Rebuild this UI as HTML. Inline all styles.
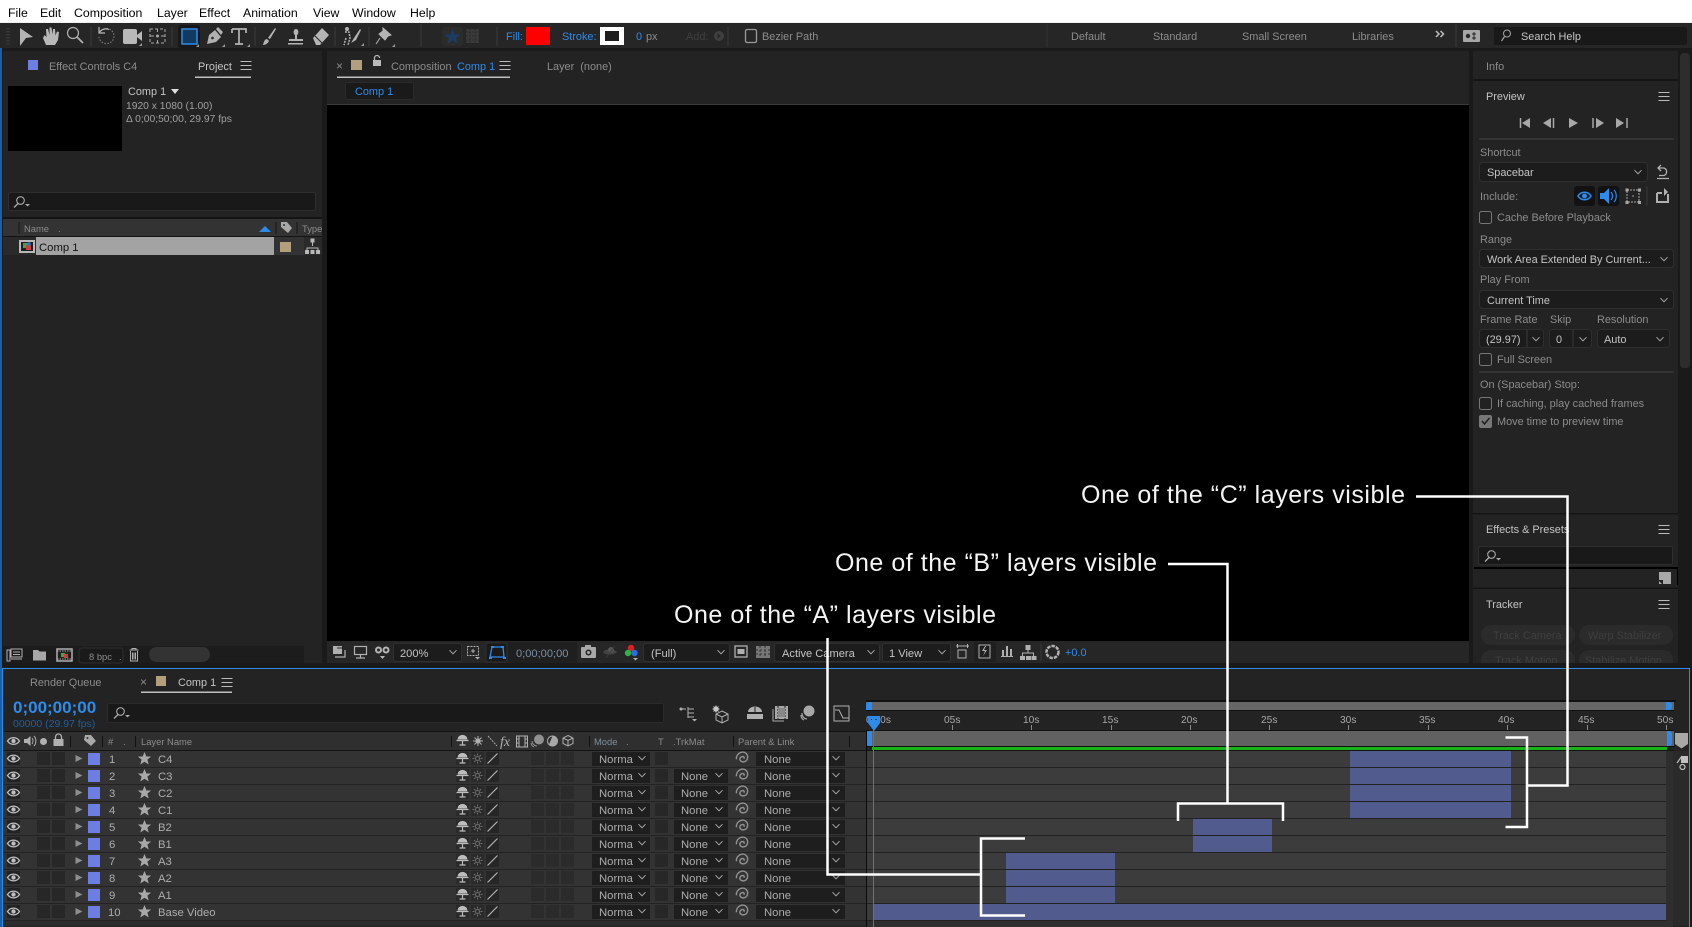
<!DOCTYPE html>
<html lang="en"><head><meta charset="utf-8"><title>After Effects</title>
<style>
html,body{margin:0;padding:0;background:#1a1a1a;width:1692px;height:927px;overflow:hidden}
svg{display:block;position:absolute;left:0;top:0}
text{font-family:"Liberation Sans",sans-serif;font-size:10.9px;fill:#a6a6a6;white-space:pre}
.m{font-size:12.3px;fill:#000}
.d{fill:#8c8c8c}.w{fill:#c4c4c4}.b{fill:#2d8ceb}.f{fill:#3f3f3f}.g{fill:#5a5a5a}
.h{font-size:9.4px;fill:#8c8c8c}
.t{font-size:10.2px;fill:#a8a8a8}
.a{font-size:25px;fill:#f4f4f4}
.r{font-size:11.3px;fill:#adadad}
.l{font-size:10.3px;fill:#a0a0a0}
.v{font-size:11.1px;fill:#c4c4c4}
</style></head><body>
<svg width="1692" height="927" viewBox="0 0 1692 927" xmlns="http://www.w3.org/2000/svg">
<defs>
<g id="eye"><path d="M-6 0C-3-4.5 3-4.5 6 0C3 4.5-3 4.5-6 0Z" fill="none" stroke="#bdbdbd" stroke-width="1.3"/><circle r="2.2" fill="#bdbdbd"/></g>
<polygon id="star" points="0,-6.5 1.9,-2 6.6,-2 2.9,1.1 4.2,6 0,3.3 -4.2,6 -2.9,1.1 -6.6,-2 -1.9,-2" fill="#a8a8a8"/>
<g id="shy"><path d="M-5-.5a5 4.6 0 0 1 10 0z" fill="#bdbdbd"/><path d="M-6 .5H6M0 .5V5M-3 5H3" stroke="#bdbdbd" stroke-width="1.2" fill="none"/></g>
<g id="sun" fill="none" stroke="#6e6e6e"><circle r="2"/><path d="M0-5V-3M0 3V5M-5 0H-3M3 0H5M-3.5-3.5L-2-2M2 2L3.5 3.5M-3.5 3.5L-2 2M2-2L3.5-3.5"/></g>
<g id="spiral"><path d="M.5 .5c1-1 0-2-1.5-1.5s-2 2.500-.5 3.500s4.500 .5 5-2.500s-2-5-4.500-4.500s-4.500 3-4 5.500" fill="none" stroke="#909090" stroke-width="1.1" transform="scale(1.3)"/></g>
<path id="chev" d="M-3.500-1.800L0 1.800L3.500-1.800" fill="none" stroke="#a8a8a8" stroke-width="1"/>
<polygon id="tri" points="-3.500,-3.500 3.500,0 -3.500,3.500" fill="#8e8e8e"/>
<path id="menu" d="M-5.500-4H5.500M-5.500 0H5.500M-5.500 4H5.500" stroke="#bbb" stroke-width="1"/>
<g id="lens"><circle cx="1.500" cy="-1.500" r="3.800" fill="none" stroke="#a8a8a8" stroke-width="1.100"/><path d="M-1 1.500L-5 5.500" stroke="#a8a8a8" stroke-width="1.300"/><path d="M6 2h5l-2.500 2.500z" fill="#a8a8a8"/></g>
<path id="corner" d="M3 0V3H0z" fill="#9a9a9a"/>
<g id="rowbase">
<rect x="7" y="752" width="13" height="13" fill="#232323"/>
<rect x="37" y="752" width="13" height="13" fill="#272727"/><rect x="52" y="752" width="13" height="13" fill="#272727"/>
<use href="#eye" x="13.500" y="758.500"/>
<use href="#tri" x="79" y="758.500"/>
<rect x="88" y="753" width="12" height="12" fill="#6c7ee1"/>
<use href="#star" x="144.500" y="758.500"/>
<rect x="456" y="752" width="13" height="13" fill="#2a2a2a"/>
<use href="#shy" x="462.500" y="758"/>
<rect x="471" y="752" width="13" height="13" fill="#2a2a2a"/>
<use href="#sun" x="477.500" y="758.500"/>
<rect x="486" y="752" width="13" height="13" fill="#262626"/>
<path d="M487.500 763.500L497.500 753.500" stroke="#b2b2b2" stroke-width="1.200"/>
<rect x="531" y="752" width="13" height="13" fill="#2b2b2b"/><rect x="546" y="752" width="13" height="13" fill="#2b2b2b"/><rect x="561" y="752" width="13" height="13" fill="#2b2b2b"/>
<rect x="592" y="752" width="58" height="14" fill="#1e1e1e"/>
<use href="#chev" x="642" y="758"/>
<rect x="655" y="752" width="13" height="13" fill="#272727"/>
<use href="#spiral" x="743" y="758"/>
<rect x="756" y="752" width="89" height="14" fill="#1e1e1e"/>
<use href="#chev" x="836" y="758"/>
</g>
<g id="trk"><rect x="674" y="752" width="54" height="14" fill="#1e1e1e"/><use href="#chev" x="719" y="758"/></g>
<clipPath id="nc"><rect x="590" y="745" width="43" height="30"/></clipPath>
</defs>

<!-- base -->
<rect width="1692" height="927" fill="#1a1a1a"/>
<rect width="1692" height="22" fill="#fff"/>
<rect y="22" width="1692" height="1" fill="#f0f0f0"/>
<rect y="23" width="1692" height="25" fill="#262626"/>
<rect x="0" y="48" width="2" height="879" fill="#1b5fa8"/>

<!-- menu -->
<text class="m" x="8" y="17">File</text><text class="m" x="40" y="17">Edit</text><text class="m" x="74" y="17">Composition</text><text class="m" x="157" y="17">Layer</text><text class="m" x="199" y="17">Effect</text><text class="m" x="243" y="17">Animation</text><text class="m" x="313" y="17">View</text><text class="m" x="352" y="17">Window</text><text class="m" x="410" y="17">Help</text>

<!-- toolbar -->
<path d="M7 28V45M9 28V45" stroke="#444" stroke-dasharray="1.500 1.500" fill="none"/>
<path d="M20 28L33 37L26 38L20 46Z" fill="#b4b4b4"/>
<path d="M43 38l3 7h9l3-5 1-8-2-.5-1.500 4-.5-6.500h-2l-.5 5.500-1-7h-2l0 7.500-1.500-6h-2l.5 8-2-2z" fill="#b8b8b8"/>
<circle cx="73" cy="33" r="5.500" fill="none" stroke="#b0b0b0" stroke-width="1.200"/><path d="M77 37L83 43" stroke="#b0b0b0" stroke-width="1.800"/>
<path d="M91 27V46" stroke="#3a3a3a"/>
<path d="M101 31a7.500 7.500 0 1 1 -2 6" fill="none" stroke="#777" stroke-width="1.200" stroke-dasharray="1.500 1.500"/><path d="M99 27v6h6" fill="none" stroke="#b8b8b8" stroke-width="1.200"/><path d="M99 33a8 8 0 0 1 10-3.500" fill="none" stroke="#b8b8b8" stroke-width="1.200"/>
<rect x="123" y="29" width="14" height="15" rx="2" fill="#b8b8b8"/><path d="M137 35l5-4v10l-5-4z" fill="#b8b8b8"/><use href="#corner" x="139" y="43"/>
<rect x="150" y="29" width="15" height="14" fill="none" stroke="#a8a8a8" stroke-dasharray="3 2"/><path d="M150 36h4M161 36h4M157.500 29v3M157.500 40v3" stroke="#a8a8a8"/><circle cx="157.500" cy="36" r="1.500" fill="#a8a8a8"/>
<path d="M172 27V46" stroke="#3a3a3a"/>
<rect x="178" y="25" width="22" height="23" rx="3" fill="#181818"/>
<rect x="182" y="29" width="15" height="15" fill="#123a5e" stroke="#2d8ceb" stroke-width="1.500"/><use href="#corner" x="196" y="44"/>
<path d="M207 44l2-9 6-5 6 7-5 5zM216 29l2-2 5 5-2 3z" fill="#b0b0b0"/><circle cx="212.500" cy="38" r="1.300" fill="#262626"/><use href="#corner" x="222" y="44"/>
<path d="M232 29h14v4M239 29v15M235 44h8M232 33v-4" fill="none" stroke="#b4b4b4" stroke-width="1.700"/><use href="#corner" x="247" y="44"/>
<path d="M255 27V46" stroke="#3a3a3a"/>
<path d="M263 45c1-4 2-6 4-6l2 2c-1 2-3 4-6 4zM268 38l7-10 1 1-6 10z" fill="#b4b4b4"/>
<path d="M295 39v-4c-2-1-2-6 1-6s3 5 1 6v4h6v2h-14v-2zM288 43h15v1.500h-15z" fill="#b4b4b4"/>
<path d="M313 38l9-10 7 7-9 10h-4z" fill="#b4b4b4"/><path d="M315 36l7 7" stroke="#262626"/>
<path d="M335 27V46" stroke="#3a3a3a"/>
<circle cx="347" cy="29" r="2" fill="#b4b4b4"/><path d="M345 32h4l1 6-2 7M346 38l-2 7" fill="none" stroke="#b4b4b4" stroke-width="1.500" stroke-dasharray="2 1"/><path d="M351 43l3-5 6-9 1 1-5 10z" fill="#b4b4b4"/><use href="#corner" x="361" y="43"/>
<path d="M369 27V46" stroke="#3a3a3a"/>
<path d="M383 28l8 7-3 1-3 4-6-6 4-3zM380 38l-4 6" fill="#b4b4b4" stroke="#b4b4b4"/><use href="#corner" x="392" y="44"/>
<path d="M421 24V47" stroke="#3a3a3a"/>
<rect x="442" y="27" width="21" height="19" rx="3" fill="#2c2c2c"/>
<polygon points="452.500,29 454.800,34.500 460.500,34.500 456,38 457.500,43.500 452.500,40.300 447.500,43.500 449,38 444.500,34.500 450.200,34.500" fill="#1a3d66"/>
<rect x="466" y="29" width="13" height="14" fill="#3a3a3a"/><path d="M466 32h13M466 36h13M466 40h13M470 29v14M475 29v14" stroke="#262626" stroke-dasharray="1.500 1.500"/>
<path d="M497 27V46" stroke="#3a3a3a"/>
<text class="b" x="506" y="40">Fill:</text>
<rect x="526" y="27" width="24" height="18" fill="#f00"/>
<text class="b" x="562" y="40">Stroke:</text>
<rect x="600" y="27" width="24" height="18" fill="#fff"/><rect x="605" y="31" width="14" height="10" fill="#1e1e1e"/>
<text class="b" x="636" y="40">0</text><text class="d" x="646" y="40">px</text>
<text class="f" x="686" y="40">Add:</text>
<circle cx="719" cy="36" r="5" fill="#3f3f3f"/><path d="M717.500 33.500l3.500 2.500-3.500 2.500z" fill="#262626"/>
<path d="M728 27V46" stroke="#3a3a3a"/>
<rect x="745.500" y="29.500" width="11" height="13" rx="1.500" fill="none" stroke="#9a9a9a" stroke-width="1.300"/>
<text class="d" x="762" y="40">Bezier Path</text>
<path d="M1047 24V47" stroke="#333"/>
<text class="d" x="1071" y="40">Default</text><text class="d" x="1153" y="40">Standard</text><text class="d" x="1242" y="40">Small Screen</text><text class="d" x="1352" y="40">Libraries</text>
<path d="M1436 31l3 3-3 3M1440.500 31l3 3-3 3" fill="none" stroke="#bdbdbd" stroke-width="1.500"/>
<path d="M1456 24V47" stroke="#3a3a3a"/>
<rect x="1463" y="30" width="17" height="12" rx="1" fill="#a6a6a6"/><circle cx="1468" cy="36" r="2.200" fill="#262626"/><path d="M1474 32v8M1472 34h4M1472 38h4" stroke="#262626"/>
<rect x="1494" y="27" width="193" height="18" rx="2" fill="#191919"/>
<circle cx="1507" cy="33.500" r="3.500" fill="none" stroke="#a0a0a0"/><path d="M1504.500 36.500L1501.500 41" stroke="#a0a0a0" stroke-width="1.200"/>
<text class="w" x="1521" y="40">Search Help</text>

<!-- LEFT PANEL -->
<rect x="3" y="51" width="319" height="591" fill="#232323"/>
<rect x="28" y="60" width="10" height="10" fill="#6c7ee1"/>
<text class="d" x="49" y="70">Effect Controls C4</text>
<text class="w" x="198" y="70">Project</text><use href="#menu" x="246" y="65.500"/>
<rect x="195" y="76.500" width="56" height="1.500" fill="#c0c0c0"/>
<rect x="8" y="86" width="114" height="65" fill="#000"/>
<text class="w" x="128" y="95">Comp 1</text><polygon points="171,89 179,89 175,94" fill="#e0e0e0"/>
<text class="l" x="126" y="109">1920 x 1080 (1.00)</text>
<text class="l" x="126" y="122">Δ 0;00;50;00, 29.97 fps</text>
<rect x="8.500" y="192.500" width="307" height="18" rx="2" fill="#191919" stroke="#2e2e2e"/>
<use href="#lens" x="19" y="202"/>
<rect x="3" y="217" width="319" height="2" fill="#141414"/>
<rect x="3" y="219" width="319" height="17" fill="#333"/>
<rect x="3" y="236" width="319" height="1" fill="#141414"/>
<path d="M19 222V234M276 222V234M297 222V234" stroke="#141414"/>
<text class="h" x="24" y="232">Name</text><text class="h" x="58" y="232">.</text>
<polygon points="259,232 271,232 265,226" fill="#2d8ceb"/>
<path d="M281 222h6l5 6-4 5-7-6z" fill="#a8a8a8"/><circle cx="284" cy="225" r="1" fill="#333"/>
<text class="h" x="302" y="232">Type</text>
<rect x="3" y="237" width="319" height="18" fill="#2a2a2a"/>
<rect x="19" y="240" width="16" height="13" fill="#b8b8b8"/><rect x="21" y="242" width="12" height="9" fill="#1f1f1f"/><rect x="23" y="243" width="5" height="5" fill="#3fa34d"/><rect x="26" y="245" width="5" height="5" fill="#c64040"/><circle cx="29" cy="244" r="1.800" fill="#3a6fd8"/>
<rect x="36" y="237" width="238" height="18" fill="#a3a3a3"/>
<text x="39" y="251" style="fill:#111;font-size:11.3px">Comp 1</text>
<rect x="274" y="237" width="30" height="18" fill="#333"/>
<rect x="280" y="242" width="11" height="10" fill="#b29f7e"/>
<path d="M312.500 241v5M307 252v-4h11v4" fill="none" stroke="#b8b8b8"/><rect x="310.500" y="238.500" width="4" height="4" fill="#b8b8b8"/><rect x="305" y="250" width="4" height="4" fill="#b8b8b8"/><rect x="310.500" y="250" width="4" height="4" fill="#b8b8b8"/><rect x="316" y="250" width="4" height="4" fill="#b8b8b8"/>
<rect x="3" y="646" width="301" height="17" fill="#1c1c1c"/><rect x="3" y="642" width="319" height="4" fill="#232323"/><rect x="304" y="646" width="18" height="17" fill="#232323"/>
<path d="M7 650h3v11H7zM11 649h11v8H11zM13 652h7M13 654.500h7M11 659h11" stroke="#b0b0b0" fill="none" stroke-width="1"/>
<path d="M33 650h5l1.500 1.500H46v9H33z" fill="#a8a8a8"/>
<rect x="57" y="649" width="15" height="12" fill="none" stroke="#b0b0b0" stroke-width="1.500"/><path d="M57 651h15M57 659h15" stroke="#b0b0b0" stroke-dasharray="1.500 1" /><rect x="60" y="652" width="9" height="6" fill="#222"/><rect x="61" y="653" width="4" height="4" fill="#3fa34d"/><rect x="64" y="654" width="4" height="4" fill="#c64040"/>
<rect x="79" y="648" width="44" height="15" rx="3" fill="#1a1a1a" stroke="#2e2e2e"/>
<text class="h" x="89" y="660">8 bpc</text><text class="h" x="119" y="660">.</text>
<path d="M129.500 650h9M132 650v-1.500h4V650M130.500 651v10h7v-10M132.500 652.500v7M134 652.500v7M135.500 652.500v7" stroke="#b0b0b0" fill="none"/>
<rect x="149" y="647" width="61" height="15" rx="7.500" fill="#333"/>

<!-- COMP PANEL -->
<rect x="327" y="51" width="1142" height="54" fill="#232323"/>
<text x="336" y="70" class="d" style="font-size:12px">×</text>
<rect x="351" y="60" width="11" height="10" fill="#b29f7e"/>
<path d="M374.500 60v-2a2.500 2.500 0 0 1 5 0" fill="none" stroke="#b8b8b8" stroke-width="1.300"/><rect x="373" y="60" width="8" height="6" fill="#b8b8b8"/>
<text class="d" x="391" y="70">Composition</text><text class="b" x="457" y="70">Comp 1</text><use href="#menu" x="505" y="65.500"/>
<rect x="337" y="76.500" width="173" height="1.500" fill="#c0c0c0"/>
<text class="d" x="547" y="70">Layer  (none)</text>
<rect x="345.500" y="82.500" width="68" height="17" rx="2" fill="#1a1a1a" stroke="#2a2a2a"/>
<text class="b" x="355" y="95">Comp 1</text>
<rect x="327" y="104" width="1142" height="1" fill="#3a3a3a"/>
<rect x="327" y="105" width="1142" height="536" fill="#000"/>
<rect x="327" y="641" width="1142" height="22" fill="#262626"/>
<rect x="333" y="646" width="9" height="8" fill="#b0b0b0"/><path d="M345 650v7h-10" fill="none" stroke="#b0b0b0" stroke-width="1.200"/><path d="M337 648h5" stroke="#262626"/>
<rect x="354.500" y="646.500" width="12" height="8" fill="none" stroke="#b0b0b0" stroke-width="1.200"/><path d="M360.500 655v2.500M356 658h9" stroke="#b0b0b0" stroke-width="1.200"/>
<circle cx="378.500" cy="650" r="3.500" fill="#b4b4b4"/><circle cx="386" cy="650" r="3.500" fill="#b4b4b4"/><circle cx="378.500" cy="650" r="1.500" fill="#262626"/><circle cx="386" cy="650" r="1.500" fill="#262626"/><path d="M380 656h5l-2.500 3z" fill="#b4b4b4"/>
<rect x="393.500" y="643.500" width="68" height="18" rx="2.500" fill="#1c1c1c" stroke="#303030"/>
<text class="v" x="400" y="657">200%</text><use href="#chev" x="453" y="652"/>
<rect x="467.500" y="646.500" width="11" height="9" fill="none" stroke="#b0b0b0" stroke-dasharray="2 1"/><path d="M473 649v4M471 651h4" stroke="#b0b0b0"/><path d="M475 657h5l-2.500 2.500z" fill="#b0b0b0"/>
<rect x="486" y="643" width="21" height="19" rx="2.500" fill="#1a1a1a" stroke="#2e2e2e"/>
<path d="M490 657l2-10h11l1 10z" fill="none" stroke="#2d8ceb" stroke-width="1.300"/><path d="M489 657h3v2h-3zM503 657h3v2h-3zM491 646h3v2h-3zM501 646h3v2h-3z" fill="#2d8ceb"/>
<rect x="508" y="642" width="69" height="21" fill="#1f1f1f"/>
<text x="516" y="657" style="fill:#7a8ea2;font-size:11.100px">0;00;00;00</text>
<rect x="581" y="647" width="15" height="11" rx="1" fill="#a8a8a8"/><rect x="585" y="645" width="6" height="3" fill="#a8a8a8"/><circle cx="588.500" cy="652.500" r="3" fill="#262626"/><circle cx="588.500" cy="652.500" r="1.500" fill="#a8a8a8"/>
<path d="M603 652c2.500-3.500 11-3.500 14 0c-3 3.500-11.500 3.500-14 0z" fill="#444"/><circle cx="611" cy="650" r="3" fill="#555"/><path d="M606 658l9-12" stroke="#3a3a3a"/>
<circle cx="631" cy="648" r="3.200" fill="#e02020"/><circle cx="628" cy="653" r="3.200" fill="#2fb344"/><circle cx="634.500" cy="653" r="3.200" fill="#2d6be0"/><path d="M633 658h5l-2.500 2.500z" fill="#b0b0b0"/>
<rect x="643.500" y="643.500" width="86" height="18" rx="2.500" fill="#1c1c1c" stroke="#303030"/>
<text class="v" x="651" y="657">(Full)</text><use href="#chev" x="721" y="652"/>
<rect x="735" y="646" width="12" height="11" fill="none" stroke="#b0b0b0" stroke-width="1.300"/><rect x="737.500" y="649" width="7" height="5" fill="#b0b0b0"/>
<rect x="756" y="646" width="14" height="12" fill="#777"/><path d="M756 650h14M756 654h14M760 646v12M765 646v12" stroke="#333" stroke-dasharray="2 2"/>
<rect x="774.500" y="643.500" width="105" height="18" rx="2.500" fill="#1c1c1c" stroke="#303030"/>
<text class="v" x="782" y="657">Active Camera</text><use href="#chev" x="871" y="652"/>
<rect x="882.500" y="643.500" width="68" height="18" rx="2.500" fill="#1c1c1c" stroke="#303030"/>
<text class="v" x="889" y="657">1 View</text><use href="#chev" x="942" y="652"/>
<path d="M956 646h13M957.500 644v4M967.500 644v4" stroke="#b0b0b0"/><rect x="958" y="650" width="8" height="8" fill="none" stroke="#b0b0b0"/>
<rect x="974" y="642" width="22" height="20" rx="2" fill="#1f1f1f"/><rect x="979" y="645" width="11" height="13" fill="none" stroke="#b0b0b0"/><path d="M985 646l-3 5h3l-2 5 4-6h-3l2-4z" fill="#b0b0b0"/>
<path d="M1001 656h12v1h-12zM1002 650h2v6h-2zM1006 646h2v10h-2zM1010 649h2v7h-2z" fill="#b0b0b0"/>
<path d="M1028 650v3M1022.500 657v-4h11v4" fill="none" stroke="#b0b0b0"/><rect x="1025.500" y="645" width="5" height="5" fill="#b0b0b0"/><rect x="1020" y="656" width="5" height="4" fill="#b0b0b0"/><rect x="1026" y="656" width="5" height="4" fill="#b0b0b0"/><rect x="1031.500" y="656" width="5" height="4" fill="#b0b0b0"/>
<path d="M1041 644V661" stroke="#3a3a3a"/>
<circle cx="1052.500" cy="652" r="6" fill="none" stroke="#b0b0b0" stroke-width="2.500" stroke-dasharray="3.500 1"/>
<text class="b" x="1065" y="656">+0.0</text>

<!-- RIGHT PANEL -->
<rect x="1473" y="51" width="205" height="612" fill="#232323"/>
<rect x="1473" y="79" width="205" height="2" fill="#151515"/>
<rect x="1680" y="53" width="10" height="315" rx="4" fill="#2d2d2d"/>
<text class="d" x="1486" y="70">Info</text>
<text class="w" x="1486" y="100">Preview</text><use href="#menu" x="1664" y="96.500"/>
<path d="M1520.500 118v10" stroke="#a8a8a8" stroke-width="1.500"/><path d="M1530 118v10l-8-5z" fill="#a8a8a8"/>
<path d="M1551 118v10l-8-5z" fill="#a8a8a8"/><path d="M1553.500 118v10" stroke="#a8a8a8" stroke-width="1.500"/>
<path d="M1569 118l9 5-9 5z" fill="#a8a8a8"/>
<path d="M1593 118v10" stroke="#a8a8a8" stroke-width="1.500"/><path d="M1596 118l8 5-8 5z" fill="#a8a8a8"/>
<path d="M1616 118l8 5-8 5z" fill="#a8a8a8"/><path d="M1627 118v10" stroke="#a8a8a8" stroke-width="1.500"/>
<rect x="1479" y="138" width="195" height="2" fill="#333"/>
<text class="d" x="1480" y="156">Shortcut</text>
<rect x="1479.500" y="162.500" width="168" height="19" rx="3" fill="#1c1c1c" stroke="#2e2e2e"/>
<text class="w" x="1487" y="176">Spacebar</text><use href="#chev" x="1638" y="172"/>
<path d="M1659 168h5a4 4 0 0 1 0 7.500h-5M1661 165l-3 3 3 3M1657 178.500h12" fill="none" stroke="#b0b0b0" stroke-width="1.300"/>
<text class="d" x="1480" y="200">Include:</text>
<rect x="1574" y="186" width="21" height="20" rx="3" fill="#121212"/>
<path d="M1578 196c3-5 10-5 13 0c-3 5-10 5-13 0z" fill="none" stroke="#2d8ceb" stroke-width="1.500"/><circle cx="1584.500" cy="196" r="2.500" fill="#2d8ceb"/>
<rect x="1598" y="186" width="21" height="20" rx="3" fill="#121212"/>
<path d="M1600 193h4l5-5v16l-5-5h-4z" fill="#2d8ceb"/><path d="M1611 192c2 2 2 6 0 8M1614 190c3 3 3 9 0 12" fill="none" stroke="#2d8ceb" stroke-width="1.200"/>
<rect x="1627" y="190" width="12" height="12" fill="none" stroke="#a8a8a8" stroke-dasharray="2 1"/><path d="M1625.500 188.500h3v3h-3zM1638 188.500h3v3h-3zM1625.500 201h3v3h-3zM1638 201h3v3h-3z" fill="#a8a8a8"/><circle cx="1633" cy="196" r=".8" fill="#a8a8a8"/>
<path d="M1647 186V206" stroke="#333" stroke-width="1.500"/>
<path d="M1657 193h5M1668 194v8h-11v-9" fill="none" stroke="#b0b0b0" stroke-width="2"/><path d="M1664 188l4 4-4 4z" fill="#b0b0b0"/>
<rect x="1479.500" y="211.500" width="12" height="12" rx="2" fill="#222" stroke="#777"/>
<text class="d" x="1497" y="221">Cache Before Playback</text>
<text class="d" x="1480" y="243">Range</text>
<rect x="1479.500" y="249.500" width="194" height="18" rx="3" fill="#1c1c1c" stroke="#2e2e2e"/>
<text class="w" x="1487" y="263">Work Area Extended By Current...</text><use href="#chev" x="1664" y="259"/>
<text class="d" x="1480" y="283">Play From</text>
<rect x="1479.500" y="290.500" width="194" height="18" rx="3" fill="#1c1c1c" stroke="#2e2e2e"/>
<text class="w" x="1487" y="304">Current Time</text><use href="#chev" x="1664" y="300"/>
<text class="d" x="1480" y="323">Frame Rate</text><text class="d" x="1550" y="323">Skip</text><text class="d" x="1597" y="323">Resolution</text>
<rect x="1479.500" y="329.500" width="64" height="18" rx="3" fill="#1c1c1c" stroke="#2e2e2e"/><path d="M1527 330v17" stroke="#3a3a3a"/>
<text class="w" x="1486" y="343">(29.97)</text><use href="#chev" x="1536" y="339"/>
<rect x="1549.500" y="329.500" width="42" height="18" rx="3" fill="#1c1c1c" stroke="#2e2e2e"/><path d="M1573 330v17" stroke="#3a3a3a"/>
<text class="w" x="1556" y="343">0</text><use href="#chev" x="1583" y="339"/>
<rect x="1597.500" y="329.500" width="72" height="18" rx="3" fill="#1c1c1c" stroke="#2e2e2e"/>
<text class="w" x="1604" y="343">Auto</text><use href="#chev" x="1660" y="339"/>
<rect x="1479.500" y="353.500" width="12" height="12" rx="2" fill="#222" stroke="#777"/>
<text class="d" x="1497" y="363">Full Screen</text>
<rect x="1479" y="371" width="195" height="2" fill="#333"/>
<text class="d" x="1480" y="388">On (Spacebar) Stop:</text>
<rect x="1479.500" y="397.500" width="12" height="12" rx="2" fill="#222" stroke="#777"/>
<text class="d" x="1497" y="407">If caching, play cached frames</text>
<rect x="1479" y="415" width="13" height="13" rx="2" fill="#777"/><path d="M1482 421l2.500 3 5-6" fill="none" stroke="#1e1e1e" stroke-width="1.500"/>
<text class="d" x="1497" y="425">Move time to preview time</text>
<rect x="1473" y="513" width="205" height="1.500" fill="#151515"/>
<text class="w" x="1486" y="533">Effects &amp; Presets</text><use href="#menu" x="1664" y="529.500"/>
<rect x="1478.500" y="546.500" width="194" height="18" rx="2" fill="#191919" stroke="#2e2e2e"/>
<use href="#lens" x="1490" y="556"/>
<rect x="1474" y="567" width="204" height="2" fill="#000"/>
<path d="M1659 572h12v12h-8v-4h-4z" fill="#a8a8a8"/><path d="M1659 581l3 3h-3z" fill="#a8a8a8"/>
<rect x="1677" y="569" width="1" height="16" fill="#000"/>
<rect x="1473" y="587.500" width="205" height="1.500" fill="#151515"/>
<text class="w" x="1486" y="608">Tracker</text><use href="#menu" x="1664" y="604.500"/>
<rect x="1481" y="625" width="94" height="20" rx="10" fill="#2b2b2b"/><rect x="1579" y="625" width="94" height="20" rx="10" fill="#2b2b2b"/>
<rect x="1481" y="650" width="94" height="20" rx="10" fill="#2b2b2b"/><rect x="1579" y="650" width="94" height="20" rx="10" fill="#2b2b2b"/>
<text class="f" x="1493" y="639">Track Camera</text><text class="f" x="1588" y="639">Warp Stabilizer</text>
<text class="f" x="1495" y="664">Track Motion</text><text class="f" x="1585" y="664">Stabilize Motion</text>
<rect x="1470" y="663" width="222" height="5" fill="#1a1a1a"/>

<!-- TIMELINE PANEL -->
<rect x="2" y="668" width="1688" height="259" fill="#232323"/>
<path d="M2.500 927V668.500H1689.500V927" fill="none" stroke="#2d8ceb"/>
<text class="d" x="30" y="686">Render Queue</text>
<text class="d" x="140" y="686" style="font-size:12px">×</text>
<rect x="156" y="676" width="10" height="10" fill="#b29f7e"/>
<text class="w" x="178" y="686">Comp 1</text><use href="#menu" x="227" y="682.500"/>
<rect x="141" y="691.500" width="91" height="1.500" fill="#c0c0c0"/>
<text x="13" y="713" style="font-size:17px;font-weight:bold;fill:#2d8ceb">0;00;00;00</text>
<text x="13" y="727" style="font-size:10.500px;fill:#1f5f9e">00000 (29.97 fps)</text>
<rect x="107.500" y="703.500" width="556" height="19" rx="2" fill="#191919" stroke="#2a2a2a"/>
<use href="#lens" x="119" y="713"/>
<!-- switches -->
<path d="M680 709h6M688 707v11M688 709h6M688 713h6M688 717h6" stroke="#b0b0b0" fill="none"/><circle cx="681" cy="709" r="1.500" fill="#b0b0b0"/><path d="M692 719h5l-2.500 2.500z" fill="#b0b0b0"/>
<path d="M716 705l1 2 2-1-1 2 2 1-2 1 1 2-2-1-1 2-1-2-2 1 1-2-2-1 2-1-1-2 2 1z" fill="#c8c8c8"/><path d="M722 711l6 3v6l-6 3-6-3v-6z" fill="none" stroke="#b0b0b0"/><path d="M716 714l6 3 6-3M722 717v6" fill="none" stroke="#b0b0b0"/>
<path d="M748 712a7 5.500 0 0 1 14 0z" fill="#b0b0b0"/><path d="M755 707v5" stroke="#232323"/><rect x="747" y="714" width="16" height="5" fill="#b0b0b0"/>
<rect x="775" y="706" width="13" height="13" fill="#a8a8a8"/><path d="M778 706v13M785 706v13" stroke="#232323" stroke-dasharray="2 1"/><rect x="778" y="708" width="7" height="9" fill="#888"/><path d="M773 709v12h11" fill="none" stroke="#a8a8a8"/>
<circle cx="809" cy="711" r="5.500" fill="#a8a8a8"/><path d="M802 713a5.500 5.500 0 0 0 5 6M801 715a5.500 5.500 0 0 0 3 5" fill="none" stroke="#a8a8a8" stroke-width="1.200"/>
<rect x="834" y="706" width="15" height="15" fill="none" stroke="#b0b0b0"/><path d="M835 710h4l4 8h6" fill="none" stroke="#b0b0b0"/>
<!-- header -->
<rect x="3" y="731" width="863" height="1" fill="#141414"/>
<rect x="3" y="732" width="863" height="18" fill="#2f2f2f"/>
<rect x="3" y="750" width="1671" height="1" fill="#141414"/>
<use href="#eye" x="13.500" y="741"/>
<path d="M24 739h3l3.500-3v10l-3.500-3h-3z" fill="#b0b0b0"/><path d="M32 738a5 5 0 0 1 0 6M34 736a7.500 7.500 0 0 1 0 10" fill="none" stroke="#b0b0b0"/>
<circle cx="43.500" cy="741.500" r="3.500" fill="#b0b0b0"/>
<path d="M55.500 739v-2a3 3 0 0 1 6 0v2" fill="none" stroke="#b0b0b0" stroke-width="1.300"/><rect x="53.500" y="739" width="10" height="7" fill="#b0b0b0"/>
<path d="M70.500 736V747M102.500 736V747M135.500 736V747M451.500 736V747M589.500 736V747M733.500 736V747M849.500 736V747" stroke="#111"/>
<path d="M85 735h6l5 6-5 5-7-6z" fill="#a8a8a8"/><circle cx="87.500" cy="738" r="1" fill="#2f2f2f"/>
<text class="h" x="108" y="745">#</text><text class="h" x="123" y="745">.</text>
<text class="h" x="141" y="745">Layer Name</text>
<use href="#shy" x="462.500" y="740"/>
<path d="M473 741h10M478 736v10M474.500 737.500l7 7M474.500 744.500l7-7" stroke="#b0b0b0"/><circle cx="478" cy="741" r="2.500" fill="#b0b0b0"/>
<path d="M488 736l9 10" stroke="#a8a8a8" stroke-dasharray="2 1"/>
<text x="500" y="746" style="font-size:14px;font-style:italic;font-family:'Liberation Serif',serif;fill:#b0b0b0">fx</text>
<rect x="516.500" y="736" width="11" height="11" fill="none" stroke="#b0b0b0"/><path d="M519 736v11M525 736v11M516 739h3M516 743h3M525 739h3M525 743h3" stroke="#b0b0b0"/>
<circle cx="539" cy="739.500" r="5" fill="#909090"/><path d="M532 741a5 5 0 0 0 5 5M531 743a5 5 0 0 0 3 4" fill="none" stroke="#909090"/>
<circle cx="552.500" cy="741" r="5" fill="#a8a8a8"/><path d="M552.500 736a5 5 0 0 0-3.500 8.500z" fill="#2f2f2f"/><circle cx="552.500" cy="741" r="5" fill="none" stroke="#a8a8a8"/>
<path d="M568 735.500l5 2.500v5.500l-5 2.500-5-2.500V738zM563 738l5 2.500 5-2.500M568 740.500V746" fill="none" stroke="#b0b0b0"/>
<text class="h" x="594" y="745" style="fill:#7f8da0">Mode</text><text class="h" x="626" y="745" style="fill:#7f8da0">.</text>
<text class="h" x="658" y="745">T</text><text class="h" x="673" y="745">.TrkMat</text>
<text class="h" x="738" y="745">Parent &amp; Link</text>

<!-- layer rows -->
<rect x="3" y="751" width="863" height="170" fill="#333"/>
<path d="M3 767.500H866M3 784.500H866M3 801.500H866M3 818.500H866M3 835.500H866M3 852.500H866M3 869.500H866M3 886.500H866M3 903.500H866M3 920.500H866" stroke="#222"/>
<rect x="3" y="921" width="863" height="5" fill="#2c2c2c"/>

<use href="#rowbase"/>
<text class="r" x="109" y="763">1</text><text class="r" x="158" y="763">C4</text><text class="r" x="599" y="763" clip-path="url(#nc)">Normal</text><text class="r" x="764" y="763">None</text>

<g transform="translate(0,17)"><use href="#rowbase"/><use href="#trk"/><text class="r" x="109" y="763">2</text><text class="r" x="158" y="763">C3</text><text class="r" x="599" y="763" clip-path="url(#nc)">Normal</text><text class="r" x="681" y="763">None</text><text class="r" x="764" y="763">None</text></g>
<g transform="translate(0,34)"><use href="#rowbase"/><use href="#trk"/><text class="r" x="109" y="763">3</text><text class="r" x="158" y="763">C2</text><text class="r" x="599" y="763" clip-path="url(#nc)">Normal</text><text class="r" x="681" y="763">None</text><text class="r" x="764" y="763">None</text></g>
<g transform="translate(0,51)"><use href="#rowbase"/><use href="#trk"/><text class="r" x="109" y="763">4</text><text class="r" x="158" y="763">C1</text><text class="r" x="599" y="763" clip-path="url(#nc)">Normal</text><text class="r" x="681" y="763">None</text><text class="r" x="764" y="763">None</text></g>
<g transform="translate(0,68)"><use href="#rowbase"/><use href="#trk"/><text class="r" x="109" y="763">5</text><text class="r" x="158" y="763">B2</text><text class="r" x="599" y="763" clip-path="url(#nc)">Normal</text><text class="r" x="681" y="763">None</text><text class="r" x="764" y="763">None</text></g>
<g transform="translate(0,85)"><use href="#rowbase"/><use href="#trk"/><text class="r" x="109" y="763">6</text><text class="r" x="158" y="763">B1</text><text class="r" x="599" y="763" clip-path="url(#nc)">Normal</text><text class="r" x="681" y="763">None</text><text class="r" x="764" y="763">None</text></g>
<g transform="translate(0,102)"><use href="#rowbase"/><use href="#trk"/><text class="r" x="109" y="763">7</text><text class="r" x="158" y="763">A3</text><text class="r" x="599" y="763" clip-path="url(#nc)">Normal</text><text class="r" x="681" y="763">None</text><text class="r" x="764" y="763">None</text></g>
<g transform="translate(0,119)"><use href="#rowbase"/><use href="#trk"/><text class="r" x="109" y="763">8</text><text class="r" x="158" y="763">A2</text><text class="r" x="599" y="763" clip-path="url(#nc)">Normal</text><text class="r" x="681" y="763">None</text><text class="r" x="764" y="763">None</text></g>
<g transform="translate(0,136)"><use href="#rowbase"/><use href="#trk"/><text class="r" x="109" y="763">9</text><text class="r" x="158" y="763">A1</text><text class="r" x="599" y="763" clip-path="url(#nc)">Normal</text><text class="r" x="681" y="763">None</text><text class="r" x="764" y="763">None</text></g>
<g transform="translate(0,153)"><use href="#rowbase"/><use href="#trk"/><text class="r" x="108" y="763">10</text><text class="r" x="158" y="763">Base Video</text><text class="r" x="599" y="763" clip-path="url(#nc)">Normal</text><text class="r" x="681" y="763">None</text><text class="r" x="764" y="763">None</text></g>

<!-- timeline -->
<rect x="866" y="700" width="810" height="2" fill="#111"/>
<rect x="866" y="702" width="808" height="8" fill="#666"/>
<rect x="866" y="710" width="808" height="1" fill="#111"/>
<path d="M872 702h-3a3 3 0 0 0-3 3v5h6z" fill="#2d8ceb"/><path d="M1666 702h3a3 3 0 0 1 3 3v2a3 3 0 0 1-3 3h-3z" fill="#2d8ceb"/>
<rect x="866" y="711" width="808" height="20" fill="#232323"/>
<text class="t" x="866" y="723">0:00s</text>
<text class="t" x="944" y="723">05s</text><text class="t" x="1023" y="723">10s</text><text class="t" x="1102" y="723">15s</text><text class="t" x="1181" y="723">20s</text><text class="t" x="1261" y="723">25s</text><text class="t" x="1340" y="723">30s</text><text class="t" x="1419" y="723">35s</text><text class="t" x="1498" y="723">40s</text><text class="t" x="1578" y="723">45s</text><text class="t" x="1657" y="723">50s</text>
<path d="M952.500 725V730M1031.500 725V730M1111.500 725V730M1190.500 725V730M1269.500 725V730M1348.500 725V730M1428.500 725V730M1507.500 725V730M1587.500 725V730M1666.500 725V730" stroke="#8a8a8a"/>
<rect x="866" y="730" width="808" height="1" fill="#111"/>
<rect x="866" y="731" width="808" height="15" fill="#616161"/>
<path d="M872 731h-3a3 3 0 0 0-3 3v9a3 3 0 0 0 3 3h3z" fill="#2d8ceb"/><path d="M1667 731h2a3 3 0 0 1 3 3v9a3 3 0 0 1-3 3h-2z" fill="#2d8ceb"/>
<rect x="867" y="746" width="807" height="1" fill="#111"/>
<rect x="872" y="747" width="795" height="3" fill="#17b317"/>
<rect x="867" y="751" width="806" height="170" fill="#3c3c3c"/>
<path d="M867 767.500H1673M867 784.500H1673M867 801.500H1673M867 818.500H1673M867 835.500H1673M867 852.500H1673M867 869.500H1673M867 886.500H1673M867 903.500H1673M867 920.500H1673" stroke="#222"/>
<rect x="867" y="921" width="806" height="6" fill="#2f2f2f"/>
<rect x="1666" y="751" width="7" height="170" fill="#2e2e2e"/>
<rect x="1673" y="751" width="16" height="175" fill="#2a2a2a"/>
<rect x="866" y="731" width="1" height="196" fill="#0c0c0c"/>
<g fill="#525b8e">
<rect x="1350" y="751" width="161" height="16"/><rect x="1350" y="768" width="161" height="16"/><rect x="1350" y="785" width="161" height="16"/><rect x="1350" y="802" width="161" height="16"/>
<rect x="1193" y="819" width="79" height="16"/><rect x="1193" y="836" width="79" height="16"/>
<rect x="1006" y="853" width="109" height="16"/><rect x="1006" y="870" width="109" height="16"/><rect x="1006" y="887" width="109" height="16"/>
<rect x="873" y="904" width="793" height="16"/>
</g>
<path d="M1675 733h13v11l-6.500 4.500-6.500-4.500z" fill="#a8a8a8"/>
<path d="M1677 763l5-7M1680 767a2.500 2.500 0 1 0 0-.1" fill="none" stroke="#c0c0c0" stroke-width="1.200"/><rect x="1681" y="756" width="7" height="7" fill="#c0c0c0"/>
<rect x="873" y="725" width="1" height="202" fill="#2d7fd4"/>
<path d="M868 716h12v7l-6 8-6-8z" fill="#2d8ceb"/><path d="M871.500 719v1M876 719v1" stroke="#111"/>

<!-- annotations -->
<text class="a" x="1081" y="503" textLength="324" lengthAdjust="spacing">One of the “C” layers visible</text>
<text class="a" x="835" y="571" textLength="322" lengthAdjust="spacing">One of the “B” layers visible</text>
<text class="a" x="674" y="623" textLength="322" lengthAdjust="spacing">One of the “A” layers visible</text>
<g fill="none" stroke="#fff">
<path d="M1416 496.500H1567.500V785.500H1527" stroke-width="2.500"/>
<path d="M1505.500 737.500H1527V827H1505.500" stroke-width="2.500"/>
<path d="M1168 564H1227.500V803" stroke-width="2.500"/>
<path d="M1178 821V803.500H1283V821" stroke-width="2.500"/>
<path d="M827.500 638V874.500H980.500" stroke-width="2.500"/>
<path d="M1025 838.500H981V915.500H1025" stroke-width="2.500"/>
</g>
</svg>
</body></html>
